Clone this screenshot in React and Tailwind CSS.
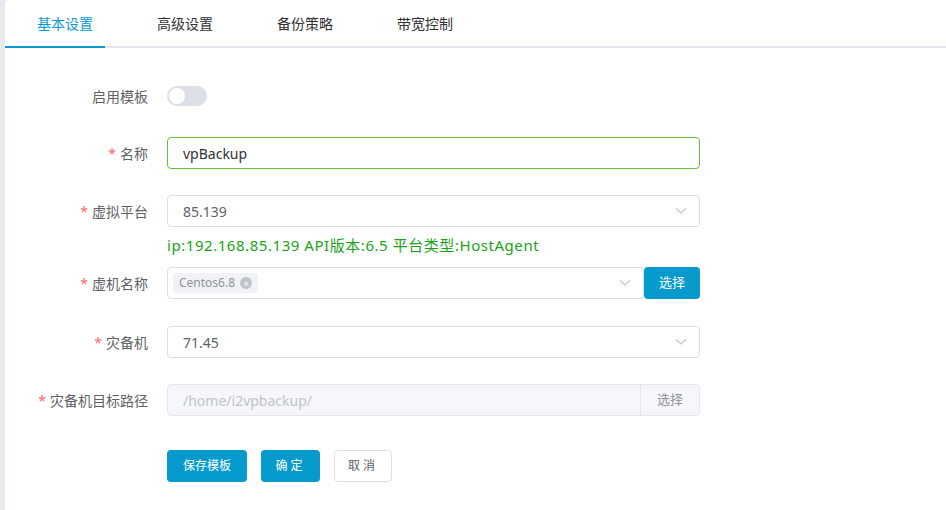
import { useState } from 'react';

const font = { fontFamily: '"Noto Sans", "Noto Sans CJK SC", sans-serif' };

const Chevron = () => (
  <svg width="12" height="8" viewBox="0 0 12 8" className="shrink-0">
    <path d="M1 1.5 L6 6 L11 1.5" fill="none" stroke="#c0c4cc" strokeWidth="1.2" />
  </svg>
);

const Label = ({ text, required }) => (
  <div className="w-[143px] shrink-0 text-right text-[14px] text-[#606266] mr-[19px]">
    {required && <span className="text-[#f56c6c] mr-1">*</span>}
    {text}
  </div>
);

const App = () => {
  const [tab, setTab] = useState(0);
  const [enabled, setEnabled] = useState(false);
  const tabs = ['基本设置', '高级设置', '备份策略', '带宽控制'];

  return (
    <div className="w-[946px] h-[510px] bg-[#e6ebf0] pl-[5px]" style={font}>
      <div className="h-full bg-white rounded-tl-[4px]">
        <div className="relative flex h-[48px] border-b-2 border-[#e4e7ed]">
          {tabs.map((t, i) => (
            <button
              key={t}
              onClick={() => setTab(i)}
              className={`relative w-[120px] h-[46px] text-[14px] ${tab === i ? 'text-[#0b9ad0]' : 'text-[#303133]'}`}
            >
              {t}
              {tab === i && (
                <span className="absolute left-0 bottom-[-2px] w-[100px] h-[2px] bg-[#0b9ad0]" />
              )}
            </button>
          ))}
        </div>

        <div className="pt-[32px]">
          <div className="flex items-center h-[32px]">
            <Label text="启用模板" />
            <button
              onClick={() => setEnabled(!enabled)}
              className={`relative w-[40px] h-[20px] rounded-full ${enabled ? 'bg-[#0b9ad0]' : 'bg-[#dcdfe6]'}`}
            >
              <span
                className={`absolute top-[2px] w-[16px] h-[16px] rounded-full bg-white ${enabled ? 'left-[22px]' : 'left-[2px]'}`}
              />
            </button>
          </div>

          <div className="flex items-center h-[32px] mt-[25px]">
            <Label text="名称" required />
            <div className="w-[533px] h-[32px] border border-[#67c23a] rounded-[4px] px-[15px] flex items-center text-[14px] text-[#303133]">
              vpBackup
            </div>
          </div>

          <div className="flex items-center h-[32px] mt-[26px]">
            <Label text="虚拟平台" required />
            <div className="w-[533px] h-[32px] border border-[#dcdfe6] rounded-[4px] pl-[15px] pr-[12px] flex items-center justify-between text-[14px] text-[#606266]">
              <span>85.139</span>
              <Chevron />
            </div>
          </div>

          <div className="ml-[162px] h-[36px] flex items-center text-[15px] text-[#1aa31a] tracking-[0.55px]">
            ip:192.168.85.139 API版本:6.5 平台类型:HostAgent
          </div>

          <div className="flex items-center h-[32px] mt-[4px]">
            <Label text="虚机名称" required />
            <div className="w-[477px] h-[32px] border border-[#dcdfe6] rounded-[4px] pl-[5px] pr-[12px] flex items-center justify-between">
              <span className="h-[20px] px-[6px] rounded-[3px] bg-[#f0f2f5] flex items-center gap-[5px] text-[12px] text-[#909399]">
                Centos6.8
                <span className="w-[12px] h-[12px] rounded-full bg-[#c0c4cc] text-white text-[9px] leading-none flex items-center justify-center">
                  ×
                </span>
              </span>
              <Chevron />
            </div>
            <button className="w-[56px] h-[32px] rounded-[4px] bg-[#079bcd] text-white text-[13px]">选择</button>
          </div>

          <div className="flex items-center h-[32px] mt-[27px]">
            <Label text="灾备机" required />
            <div className="w-[533px] h-[32px] border border-[#dcdfe6] rounded-[4px] pl-[15px] pr-[12px] flex items-center justify-between text-[14px] text-[#606266]">
              <span>71.45</span>
              <Chevron />
            </div>
          </div>

          <div className="flex items-center h-[32px] mt-[26px]">
            <Label text="灾备机目标路径" required />
            <div className="w-[533px] h-[32px] border border-[#e4e7ed] rounded-[4px] bg-[#f5f7fa] flex items-center text-[14px]">
              <span className="flex-1 px-[15px] text-[#c0c4cc]">/home/i2vpbackup/</span>
              <span className="w-[59px] h-full border-l border-[#e4e7ed] flex items-center justify-center text-[#909399] text-[13px]">
                选择
              </span>
            </div>
          </div>

          <div className="flex items-center h-[32px] mt-[34px] ml-[162px] gap-[14px]">
            <button className="w-[80px] h-[32px] rounded-[4px] bg-[#079bcd] text-white text-[12px]">保存模板</button>
            <button className="w-[59px] h-[32px] rounded-[4px] bg-[#079bcd] text-white text-[12px] tracking-[3px]">确定</button>
            <button className="w-[58px] h-[32px] rounded-[4px] border border-[#dcdfe6] bg-white text-[#606266] text-[12px] tracking-[3px]">取消</button>
          </div>
        </div>
      </div>
    </div>
  );
};

export default App;
